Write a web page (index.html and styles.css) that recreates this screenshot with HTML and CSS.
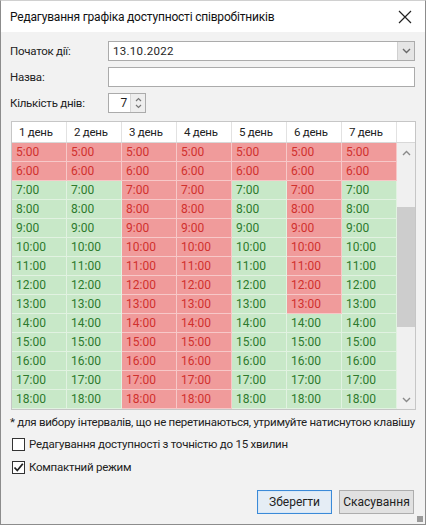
FILE: index.html
```html
<!DOCTYPE html>
<html lang="uk">
<head>
<meta charset="utf-8">
<title>Редагування графіка доступності співробітників</title>
<link rel="stylesheet" href="styles.css">
</head>
<body>
<div class="dialog">
  <div class="titlebar">
    <span class="title">Редагування графіка доступності співробітників</span>
    <svg class="close" width="14" height="14" viewBox="0 0 14 14"><path d="M1 1 L13 13 M13 1 L1 13" stroke="#222" stroke-width="1.2" fill="none"/></svg>
  </div>
  <div class="content">
    <div class="form">
      <span class="lbl">Початок дії:</span>
      <div class="input combo">
        <span class="txt">13.10.2022</span>
        <span class="drop"><svg width="9" height="6" viewBox="0 0 9 6"><path d="M1 1 L4.5 4.5 L8 1" stroke="#6a6a6a" stroke-width="1.4" fill="none"/></svg></span>
      </div>
      <span class="lbl">Назва:</span>
      <div class="input"></div>
      <span class="lbl">Кількість днів:</span>
      <div class="input spin">
        <span class="val">7</span>
        <span class="spinbtn">
          <svg width="7" height="5" viewBox="0 0 7 5"><path d="M1 4 L3.5 1.5 L6 4" stroke="#777" stroke-width="1.2" fill="none"/></svg>
          <svg width="7" height="5" viewBox="0 0 7 5"><path d="M1 1 L3.5 3.5 L6 1" stroke="#777" stroke-width="1.2" fill="none"/></svg>
        </span>
      </div>
    </div>

    <div class="table">
      <div class="head">
        <div class="hc">1 день</div><div class="hc">2 день</div><div class="hc">3 день</div><div class="hc">4 день</div><div class="hc">5 день</div><div class="hc">6 день</div><div class="hc">7 день</div><div class="hc blank"></div>
      </div>
      <div class="tbody">
        <div class="cells">
          <div class="c r">5:00</div><div class="c r">5:00</div><div class="c r">5:00</div><div class="c r">5:00</div><div class="c r">5:00</div><div class="c r">5:00</div><div class="c r">5:00</div>
          <div class="c r">6:00</div><div class="c r">6:00</div><div class="c r">6:00</div><div class="c r">6:00</div><div class="c r">6:00</div><div class="c r">6:00</div><div class="c r">6:00</div>
          <div class="c g">7:00</div><div class="c g">7:00</div><div class="c r">7:00</div><div class="c r">7:00</div><div class="c g">7:00</div><div class="c r">7:00</div><div class="c g">7:00</div>
          <div class="c g">8:00</div><div class="c g">8:00</div><div class="c r">8:00</div><div class="c r">8:00</div><div class="c g">8:00</div><div class="c r">8:00</div><div class="c g">8:00</div>
          <div class="c g">9:00</div><div class="c g">9:00</div><div class="c r">9:00</div><div class="c r">9:00</div><div class="c g">9:00</div><div class="c r">9:00</div><div class="c g">9:00</div>
          <div class="c g">10:00</div><div class="c g">10:00</div><div class="c r">10:00</div><div class="c r">10:00</div><div class="c g">10:00</div><div class="c r">10:00</div><div class="c g">10:00</div>
          <div class="c g">11:00</div><div class="c g">11:00</div><div class="c r">11:00</div><div class="c r">11:00</div><div class="c g">11:00</div><div class="c r">11:00</div><div class="c g">11:00</div>
          <div class="c g">12:00</div><div class="c g">12:00</div><div class="c r">12:00</div><div class="c r">12:00</div><div class="c g">12:00</div><div class="c r">12:00</div><div class="c g">12:00</div>
          <div class="c g">13:00</div><div class="c g">13:00</div><div class="c r">13:00</div><div class="c r">13:00</div><div class="c g">13:00</div><div class="c r">13:00</div><div class="c g">13:00</div>
          <div class="c g">14:00</div><div class="c g">14:00</div><div class="c r">14:00</div><div class="c r">14:00</div><div class="c g">14:00</div><div class="c g">14:00</div><div class="c g">14:00</div>
          <div class="c g">15:00</div><div class="c g">15:00</div><div class="c r">15:00</div><div class="c r">15:00</div><div class="c g">15:00</div><div class="c g">15:00</div><div class="c g">15:00</div>
          <div class="c g">16:00</div><div class="c g">16:00</div><div class="c r">16:00</div><div class="c r">16:00</div><div class="c g">16:00</div><div class="c g">16:00</div><div class="c g">16:00</div>
          <div class="c g">17:00</div><div class="c g">17:00</div><div class="c r">17:00</div><div class="c r">17:00</div><div class="c g">17:00</div><div class="c g">17:00</div><div class="c g">17:00</div>
          <div class="c g">18:00</div><div class="c g">18:00</div><div class="c r">18:00</div><div class="c r">18:00</div><div class="c g">18:00</div><div class="c g">18:00</div><div class="c g">18:00</div>
        </div>
        <div class="scrollbar">
          <div class="sbtn"><svg width="9" height="6" viewBox="0 0 9 6"><path d="M1 5 L4.5 1.5 L8 5" stroke="#8a8a8a" stroke-width="1.4" fill="none"/></svg></div>
          <div class="track">
            <div class="thumb"></div>
          </div>
          <div class="sbtn"><svg width="9" height="6" viewBox="0 0 9 6"><path d="M1 1 L4.5 4.5 L8 1" stroke="#8a8a8a" stroke-width="1.4" fill="none"/></svg></div>
        </div>
      </div>
    </div>

    <div class="note">* для вибору інтервалів, що не перетинаються, утримуйте натиснутою клавішу</div>

    <div class="check first"><span class="box"></span><span>Редагування доступності з точністю до 15 хвилин</span></div>
    <div class="check"><span class="box checked"><svg width="11" height="11" viewBox="0 0 11 11"><path d="M1.5 5.5 L4.3 8.5 L9.8 1.8" stroke="#222" stroke-width="1.8" fill="none"/></svg></span><span>Компактний режим</span></div>

    <div class="buttons">
      <button class="btn default">Зберегти</button>
      <button class="btn">Скасування</button>
    </div>
  </div>
  <div class="grip"></div>
</div>
</body>
</html>
```

FILE: styles.css
```css
html, body {
  margin: 0;
  padding: 0;
}
body {
  font-family: Roboto, "Open Sans", sans-serif;
  font-size: 11.5px;
  letter-spacing: -0.25px;
  color: #1e1e1e;
  background: #f2f2f2;
}
.dialog {
  position: relative;
  width: 426px;
  height: 525px;
  box-sizing: border-box;
  border: 1px solid #8c8c8c;
  border-top-color: #d0d0d0;
  background: #f2f2f2;
  display: flex;
  flex-direction: column;
  overflow: hidden;
}
.titlebar {
  height: 31px;
  flex: none;
  background: #ffffff;
  display: flex;
  align-items: center;
  justify-content: space-between;
  padding: 0 13px 0 9px;
}
.title {
  font-size: 12px;
  letter-spacing: -0.2px;
  color: #111;
}
.close {
  display: block;
}
.content {
  flex: 1;
  display: flex;
  flex-direction: column;
  padding: 9px 10px 0 9px;
}
.form {
  display: grid;
  grid-template-columns: 98px 1fr;
  row-gap: 6px;
  align-items: center;
}
.lbl {
  line-height: 20px;
  color: #222;
}
.input {
  height: 20px;
  box-sizing: border-box;
  border: 1px solid #ababab;
  background: #fff;
  display: flex;
  align-items: center;
}
.combo .txt {
  flex: 1;
  padding-left: 4px;
  letter-spacing: 0.3px;
}
.drop {
  width: 16px;
  height: 18px;
  background: #e5e5e5;
  border-left: 1px solid #d0d0d0;
  display: flex;
  align-items: center;
  justify-content: center;
}
.spin {
  width: 38px;
}
.spin .val {
  flex: 1;
  text-align: right;
  padding-right: 3px;
  font-size: 12px;
}
.spinbtn {
  width: 14px;
  height: 18px;
  background: #eeeeee;
  border-left: 1px solid #d6d6d6;
  display: flex;
  flex-direction: column;
  align-items: center;
  justify-content: center;
  gap: 2px;
}
.spinbtn svg {
  display: block;
}
.table {
  margin-top: 8px;
  margin-left: 1px;
  width: 405px;
  box-sizing: border-box;
  border: 1px solid #c6c6c6;
  background: #fff;
}
.head {
  display: grid;
  grid-template-columns: repeat(7, 55px) 18px;
  height: 20px;
  border-bottom: 1px solid #d8d8d8;
}
.hc {
  box-sizing: border-box;
  border-right: 1px solid #e2e2e2;
  padding-left: 7px;
  line-height: 20px;
  color: #222;
}
.hc.blank {
  border-right: none;
}
.tbody {
  display: flex;
}
.cells {
  display: grid;
  grid-template-columns: repeat(7, 55px);
  grid-auto-rows: 19px;
}
.c {
  box-sizing: border-box;
  border-right: 1px solid rgba(255,255,255,0.45);
  border-bottom: 1px solid rgba(255,255,255,0.45);
  padding-left: 4px;
  line-height: 18px;
  font-size: 12px;
  letter-spacing: 0;
}
.c.r {
  background: #f09b9b;
  color: #d0312e;
}
.c.g {
  background: #c8e8c8;
  color: #2d7a2d;
}
.scrollbar {
  width: 18px;
  background: #f0f0f0;
  display: flex;
  flex-direction: column;
}
.sbtn {
  height: 19px;
  display: flex;
  align-items: center;
  justify-content: center;
}
.track {
  flex: 1;
  padding-top: 45px;
  padding-bottom: 63px;
  display: flex;
  justify-content: center;
}
.thumb {
  width: 17px;
  background: #cdcdcd;
  flex: 1;
}
.note {
  margin-top: 4px;
  line-height: 16px;
  white-space: nowrap;
  letter-spacing: -0.27px;
  color: #222;
}
.check {
  display: flex;
  align-items: center;
  gap: 4px;
  margin-top: 7px;
  line-height: 16px;
  padding-left: 2px;
  color: #222;
}
.check.first {
  margin-top: 6px;
}
.box {
  width: 13px;
  height: 13px;
  box-sizing: border-box;
  border: 1px solid #333;
  background: #fff;
  display: flex;
  align-items: center;
  justify-content: center;
}
.box svg {
  display: block;
}
.buttons {
  margin-top: 15px;
  display: flex;
  justify-content: flex-end;
  gap: 7px;
  padding-right: 1px;
}
.btn {
  width: 75px;
  height: 24px;
  font-family: Roboto, "Open Sans", sans-serif;
  font-size: 12px;
  color: #222;
  background: #e1e1e1;
  border: 1px solid #adadad;
  padding: 0;
}
.btn.default {
  background: #e5edf5;
  border: 1px solid #3b8ad8;
  box-shadow: inset 0 0 0 1px #d9e8f6;
}
.grip {
  position: absolute;
  right: 2px;
  bottom: 2px;
  width: 6px;
  height: 6px;
  background-image: radial-gradient(circle, #9a9a9a 0.8px, transparent 1px);
  background-size: 2px 2px;
}
```
